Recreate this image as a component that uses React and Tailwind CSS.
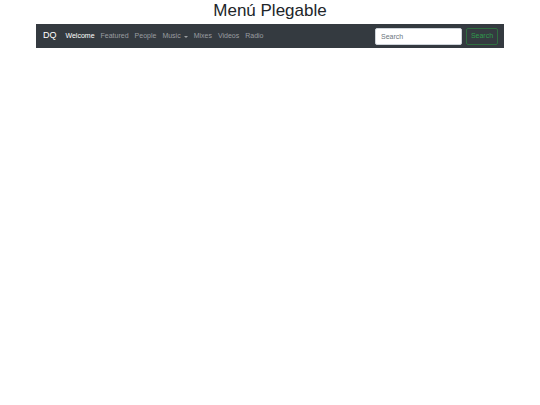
import React from "react";

const links = ["Featured", "People"];
const moreLinks = ["Mixes", "Videos", "Radio"];

export default function App() {
  return (
    <div
      className="min-h-[405px] bg-white text-[#212529]"
      style={{ fontFamily: "'Liberation Sans', Arial, sans-serif" }}
    >
      {/* Title */}
      <h1 className="pt-[1px] text-center text-[17px] leading-[20px]">
        Menú Plegable
      </h1>

      {/* Navbar */}
      <nav className="mx-[36px] mt-[3px] flex h-[24px] items-center bg-[#343a40] pl-[7px] pr-[6px]">
        <span className="mr-[9px] text-[9px] text-white">DQ</span>
        <ul className="flex items-center gap-[6px] text-[7px]">
          <li className="text-white">Welcome</li>
          {links.map((link) => (
            <li key={link} className="text-[#9a9da0]">
              {link}
            </li>
          ))}
          <li className="flex items-center gap-[3px] text-[#9a9da0]">
            Music
            <span className="mt-[1px] h-0 w-0 border-x-[2px] border-t-[2px] border-x-transparent border-t-[#9a9da0]" />
          </li>
          {moreLinks.map((link) => (
            <li key={link} className="text-[#9a9da0]">
              {link}
            </li>
          ))}
        </ul>

        <form className="ml-auto flex items-center gap-[4px]">
          <input
            type="text"
            placeholder="Search"
            className="h-[17px] w-[87px] rounded-[2px] border border-[#ced4da] bg-white px-[5px] text-[7px] outline-none placeholder-[#6c757d]"
          />
          <button
            type="button"
            className="h-[17px] w-[32px] rounded-[2px] border border-[#2f6e40] text-[7px] text-[#2f9a4c]"
          >
            Search
          </button>
        </form>
      </nav>
    </div>
  );
}
